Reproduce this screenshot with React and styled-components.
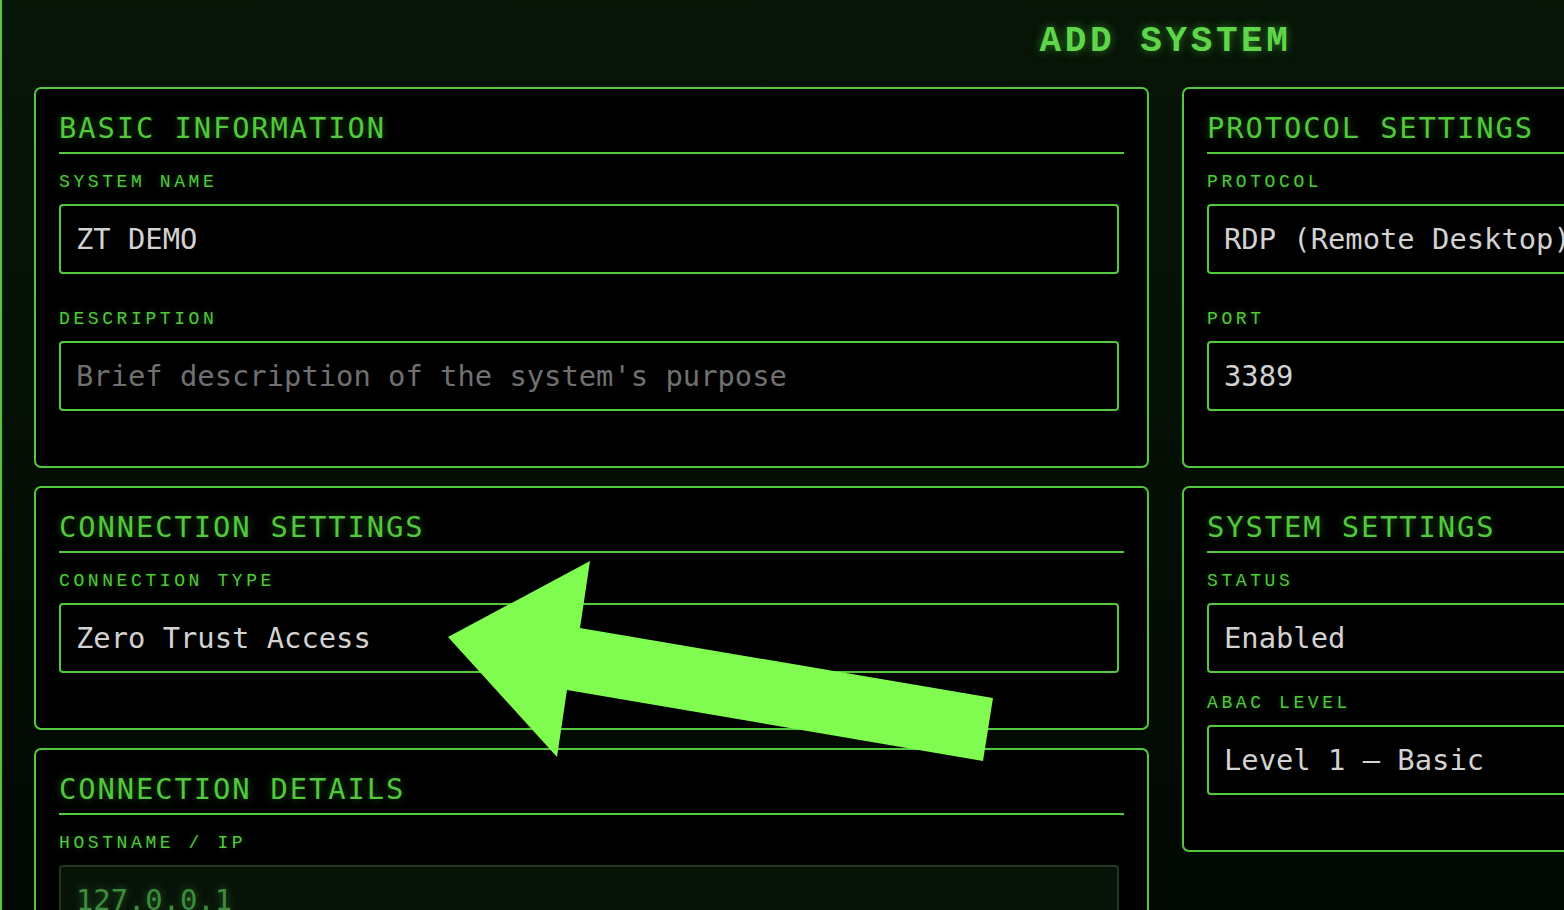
import React from "react";
import styled, { createGlobalStyle } from "styled-components";

const GREEN = "#52c93c";
const SERIF_MONO = `"Courier New", Courier, "Nimbus Mono PS", "Nimbus Mono L", FreeMono, "Liberation Mono", monospace`;

const Global = createGlobalStyle`
  html, body {
    margin: 0;
    padding: 0;
    overflow: hidden;
    background: #030a03;
  }
  * { box-sizing: border-box; }
`;

const Viewport = styled.div`
  position: relative;
  width: 1564px;
  height: 910px;
  overflow: hidden;
  background: linear-gradient(180deg, #071507 0%, #051005 45%, #020802 100%);
`;

const Page = styled.div`
  width: 2328px;
  min-height: 910px;
  border-left: 2px solid ${GREEN};
  border-right: 2px solid ${GREEN};
  padding: 21px 29px 40px 32px;
`;

const PageTitle = styled.h1`
  margin: 0 0 25px;
  text-align: center;
  font-family: ${SERIF_MONO};
  font-weight: 700;
  font-size: 36px;
  line-height: 41px;
  letter-spacing: 3.6px;
  color: #5fd64a;
  text-shadow: 0 0 10px rgba(80, 210, 60, 0.55);
`;

const Columns = styled.div`
  display: grid;
  grid-template-columns: 1115px 1115px;
  column-gap: 33px;
  align-items: start;
`;

const Column = styled.div`
  display: flex;
  flex-direction: column;
  gap: 18px;
`;

const Card = styled.section`
  background: #000;
  border: 2px solid ${GREEN};
  border-radius: 7px;
  padding: 22px 23px 20px;
`;

const SectionTitle = styled.h2`
  margin: 0 0 18px;
  padding-bottom: 7px;
  border-bottom: 2px solid ${GREEN};
  font-family: "DejaVu Sans Mono", monospace;
  font-weight: 400;
  font-size: 28.8px;
  line-height: 34px;
  letter-spacing: 1.9px;
  color: ${GREEN};
  text-shadow: 0 0 8px rgba(80, 200, 60, 0.45);
  white-space: nowrap;
`;

const Field = styled.div`
  margin-bottom: ${(p) => p.$gap ?? 35}px;
`;

const Label = styled.label`
  display: block;
  margin-bottom: 12px;
  font-family: ${SERIF_MONO};
  font-size: 18px;
  line-height: 20px;
  letter-spacing: 3.6px;
  color: ${GREEN};
  text-shadow: 0 0 6px rgba(80, 200, 60, 0.35);
`;

const Control = styled.input`
  display: block;
  width: calc(100% - 5px);
  height: 70px;
  margin: 0;
  padding: 16px 15px;
  appearance: none;
  -webkit-appearance: none;
  border: 2px solid ${(p) => (p.disabled ? "#1d3a1d" : GREEN)};
  border-radius: 4px;
  background: ${(p) => (p.disabled ? "#081308" : "#000")};
  font-family: "DejaVu Sans Mono", monospace;
  font-size: 28.8px;
  line-height: 34px;
  color: ${(p) => (p.disabled ? "#3d8c3d" : "#d2d2d2")};
  text-shadow: ${(p) => (p.disabled ? "0 0 8px rgba(70,170,70,0.55)" : "none")};
  outline: none;
  opacity: 1;
  -webkit-text-fill-color: ${(p) => (p.disabled ? "#3d8c3d" : "#d2d2d2")};
  &::placeholder {
    color: #707070;
    -webkit-text-fill-color: #707070;
  }
`;

const Overlay = styled.svg`
  position: absolute;
  left: 0;
  top: 0;
  pointer-events: none;
`;

function TextField({ label, gap, ...rest }) {
  return (
    <Field $gap={gap}>
      <Label>{label}</Label>
      <Control readOnly {...rest} />
    </Field>
  );
}

function SelectField({ label, value, gap }) {
  return (
    <Field $gap={gap}>
      <Label>{label}</Label>
      <Control as="select" defaultValue={value}>
        <option value={value}>{value}</option>
      </Control>
    </Field>
  );
}

export default function App() {
  return (
    <Viewport>
      <Global />
      <Page>
        <PageTitle>ADD SYSTEM</PageTitle>
        <Columns>
          <Column>
            <Card>
              <SectionTitle>BASIC INFORMATION</SectionTitle>
              <TextField label="SYSTEM NAME" defaultValue="ZT DEMO" />
              <TextField
                label="DESCRIPTION"
                placeholder="Brief description of the system's purpose"
              />
            </Card>
            <Card>
              <SectionTitle>CONNECTION SETTINGS</SectionTitle>
              <SelectField label="CONNECTION TYPE" value="Zero Trust Access" />
            </Card>
            <Card>
              <SectionTitle>CONNECTION DETAILS</SectionTitle>
              <TextField label="HOSTNAME / IP" defaultValue="127.0.0.1" disabled />
            </Card>
          </Column>
          <Column>
            <Card>
              <SectionTitle>PROTOCOL SETTINGS</SectionTitle>
              <SelectField label="PROTOCOL" value="RDP (Remote Desktop)" />
              <TextField label="PORT" defaultValue="3389" />
            </Card>
            <Card>
              <SectionTitle>SYSTEM SETTINGS</SectionTitle>
              <SelectField label="STATUS" value="Enabled" gap={20} />
              <SelectField label="ABAC LEVEL" value="Level 1 – Basic" />
            </Card>
          </Column>
        </Columns>
      </Page>
      <Overlay width="1564" height="910" viewBox="0 0 1564 910">
        <polygon
          points="448,637 590,561 580,628 993,698 983,761 567,690 557,757"
          fill="#80fc50"
        />
      </Overlay>
    </Viewport>
  );
}
